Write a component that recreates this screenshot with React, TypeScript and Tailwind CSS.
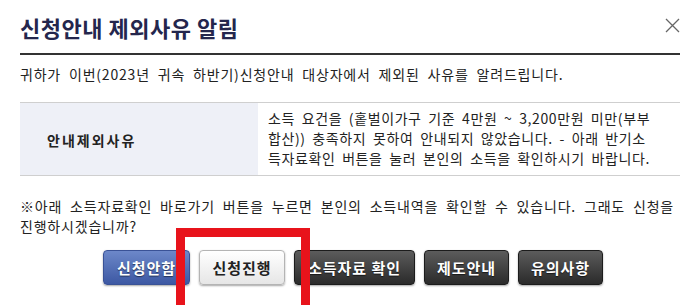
import React from 'react';

const font = { fontFamily: '"Noto Sans CJK KR", "Noto Sans", sans-serif' };

function Btn({ label, kind, w }: { label: string; kind: 'blue' | 'white' | 'dark'; w: string }) {
  const base =
    'h-[35px] rounded-[4px] text-[15px] font-bold leading-none tracking-[1px] flex items-center justify-center border';
  const styles = {
    blue: 'bg-gradient-to-b from-[#6d88c9] to-[#3d58a3] border-[#3a5296] text-white [text-shadow:0_1px_1px_rgba(0,0,0,0.5)]',
    white: 'bg-gradient-to-b from-white to-[#e6e6e6] border-[#b4b4b4] text-[#222]',
    dark: 'bg-gradient-to-b from-[#5c5c5c] to-[#2b2b2b] border-[#1c1c1c] text-white [text-shadow:0_1px_1px_rgba(0,0,0,0.6)]',
  };
  return <div className={`${base} ${styles[kind]} ${w} shadow-[0_1px_2px_rgba(0,0,0,0.35)]`}>{label}</div>;
}

export default function App() {
  return (
    <div className="relative w-[699px] h-[305px] overflow-hidden bg-white pl-[20px] pr-[19px]" style={font}>
      <div className="flex justify-between h-[55px] border-b-[2px] border-[#333]">
        <h1 className="pt-[14px] text-[22px] leading-[26px] font-bold text-[#24264d] tracking-[0.5px]">
          신청안내 제외사유 알림
        </h1>
        <svg width="15" height="15" viewBox="0 0 15 15" className="mt-[18px]">
          <path d="M1 1L14 14M14 1L1 14" stroke="#666" strokeWidth="1.3" />
        </svg>
      </div>

      <p className="mt-[9px] text-[14px] leading-[20px] text-[#222] tracking-[0.8px] [word-spacing:4px] whitespace-nowrap">
        귀하가 이번(2023년 귀속 하반기)신청안내 대상자에서 제외된 사유를 알려드립니다.
      </p>

      <div className="mt-[18px] flex border-t border-b border-[#cfcfcf]">
        <div className="w-[238px] bg-[#eef0f7] flex items-center pl-[27px] pt-[2px] text-[14px] font-bold text-[#222] tracking-[2px]">
          안내제외사유
        </div>
        <div className="flex-1 pl-[10px] pt-[5px] pb-[7px] text-[14px] leading-[20px] text-[#222] tracking-[0.6px] [word-spacing:3px] whitespace-nowrap">
          소득 요건을 (홑벌이가구 기준 4만원 ~ 3,200만원 미만(부부
          <br />
          합산)) 충족하지 못하여 안내되지 않았습니다. - 아래 반기소
          <br />
          득자료확인 버튼을 눌러 본인의 소득을 확인하시기 바랍니다.
        </div>
      </div>

      <p className="mt-[20px] text-[14px] leading-[20px] text-[#222] tracking-[0.8px] [word-spacing:4px] whitespace-nowrap">
        ※아래 소득자료확인 바로가기 버튼을 누르면 본인의 소득내역을 확인할 수 있습니다. 그래도 신청을
        <br />
        진행하시겠습니까?
      </p>

      <div className="mt-[14px] flex justify-center gap-[9px] pl-[6px]">
        <Btn label="신청안함" kind="blue" w="w-[87px]" />
        <Btn label="신청진행" kind="white" w="w-[86px]" />
        <Btn label="소득자료 확인" kind="dark" w="w-[121px]" />
        <Btn label="제도안내" kind="dark" w="w-[85px]" />
        <Btn label="유의사항" kind="dark" w="w-[85px]" />
      </div>

      <div className="absolute left-[176px] top-[228px] w-[134px] h-[90px] border-[9px] border-[#e8131b]" />
    </div>
  );
}
